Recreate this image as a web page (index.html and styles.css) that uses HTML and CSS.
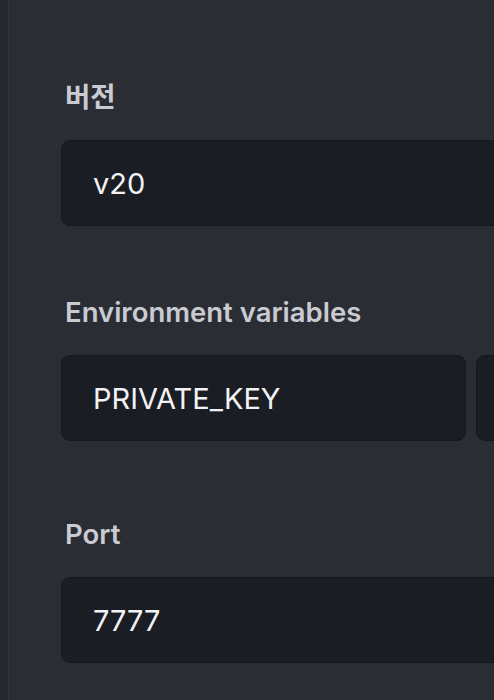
FILE: index.html
```html
<!DOCTYPE html>
<html lang="ko">
<head>
<meta charset="utf-8">
<link rel="stylesheet" href="styles.css">
</head>
<body>
<div class="layout">
  <aside class="rail"></aside>
  <main class="main">
    <form class="form">
      <div class="field field-version">
        <label class="label">버전</label>
        <div class="input">v20</div>
      </div>
      <div class="field field-env">
        <label class="label">Environment variables</label>
        <div class="env-row">
          <div class="input">PRIVATE_KEY</div>
          <div class="input"></div>
        </div>
      </div>
      <div class="field field-port">
        <label class="label">Port</label>
        <div class="input">7777</div>
      </div>
    </form>
  </main>
</div>
</body>
</html>
```
FILE: styles.css
```css
* { box-sizing: border-box; }
html, body {
  margin: 0;
  padding: 0;
  height: 100%;
  background: #2b2d35;
  overflow: hidden;
}
.layout {
  display: flex;
  height: 700px;
  font-family: Inter, "Noto Sans CJK KR", sans-serif;
}
.rail {
  width: 9px;
  flex: none;
  background: #25272d;
  border-right: 1px solid #33353c;
}
.main {
  flex: 1;
  padding: 77px 0 0 52px;
  overflow: hidden;
}
.form {
  width: 900px;
  display: flex;
  flex-direction: column;
}
.field {
  display: flex;
  flex-direction: column;
  gap: 25px;
}
.field-env { margin-top: 66px; }
.field-port { margin-top: 73px; }
.label {
  font-size: 27.5px;
  line-height: 36px;
  padding-top: 2px;
  font-weight: 600;
  color: #cacbd1;
  padding-left: 4px;
}
.input {
  height: 86px;
  background: #1b1d24;
  border: 1px solid #17181d;
  border-radius: 9px;
  padding: 0 31px;
  display: flex;
  align-items: center;
  font-size: 29px;
  color: #f2f2f4;
}
.env-row {
  display: grid;
  grid-template-columns: 405px 405px;
  gap: 10px;
}
```
